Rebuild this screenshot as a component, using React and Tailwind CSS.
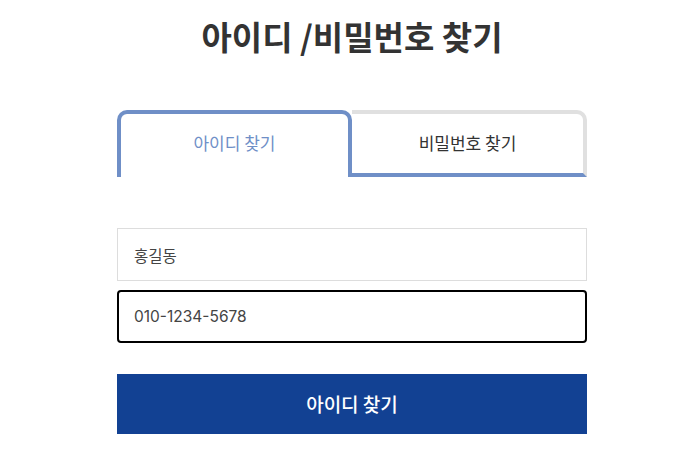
import { useState } from "react";

const font = { fontFamily: '"Noto Sans CJK KR", "Noto Sans", sans-serif' };
const inputFont = { fontFamily: 'Inter, "Noto Sans CJK KR", sans-serif' };

export default function App() {
  const [tab, setTab] = useState("id");
  const [name, setName] = useState("홍길동");
  const [phone, setPhone] = useState("010-1234-5678");

  return (
    <div className="w-[694px] h-[462px] bg-white" style={font}>
      <div className="w-[470px] ml-[117px] pt-[12px]">
        {/* Title */}
        <h1 className="text-center text-[33px] font-bold text-[#333] leading-[48px]">
          아이디 /비밀번호 찾기
        </h1>

        {/* Tabs */}
        <div className="flex mt-[50px] h-[67px]">
          <button
            onClick={() => setTab("id")}
            className="w-[235px] border-4 border-b-0 border-[#6f8fc7] rounded-t-[10px] text-[17px] text-[#6f8fc7] pb-[6px]"
          >
            아이디 찾기
          </button>
          <button
            onClick={() => setTab("pw")}
            className="flex-1 border-t-4 border-r-4 border-b-4 border-t-[#e0e0e0] border-r-[#e0e0e0] border-b-[#6f8fc7] rounded-tr-[10px] text-[17px] text-[#333] pb-[2px]"
          >
            비밀번호 찾기
          </button>
        </div>

        {/* Form */}
        <div className="mt-[51px] flex flex-col gap-[9px]">
          <input
            value={name}
            onChange={(e) => setName(e.target.value)}
            className="h-[53px] w-full border border-[#ddd] px-[16px] text-[15.5px] text-[#444] outline-none"
            style={inputFont}
          />
          <input
            autoFocus
            value={phone}
            onChange={(e) => setPhone(e.target.value)}
            className="h-[53px] w-full border-2 border-black rounded-[4px] px-[15px] text-[15.5px] text-[#444] outline-none"
            style={inputFont}
          />
        </div>

        <button className="mt-[31px] w-full h-[60px] bg-[#124193] text-white text-[19px] font-medium">
          아이디 찾기
        </button>
      </div>
    </div>
  );
}
